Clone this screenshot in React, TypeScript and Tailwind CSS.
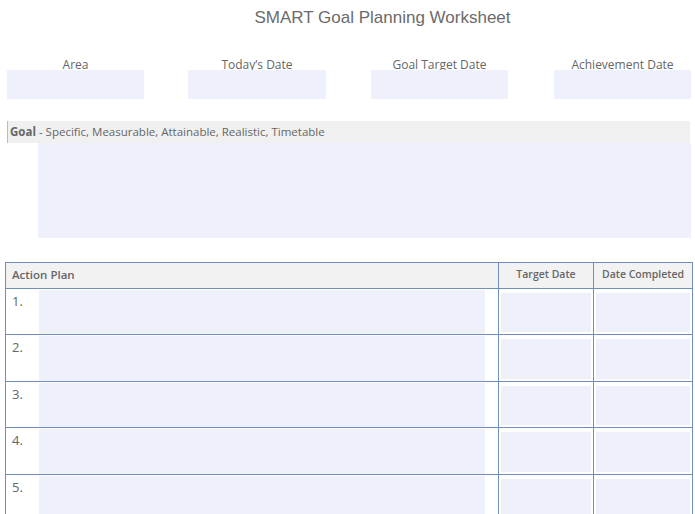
const fill = "bg-[#eef1fc]";
const font = { fontFamily: '"Open Sans", "Liberation Sans", sans-serif' };

export default function App() {
  const fields = [
    { label: "Area", w: "w-[137px]", ml: "ml-[7px]" },
    { label: "Today’s Date", w: "w-[138px]", ml: "ml-[44px]" },
    { label: "Goal Target Date", w: "w-[137px]", ml: "ml-[45px]" },
    { label: "Achievement Date", w: "w-[137px]", ml: "ml-[46px]" },
  ];

  return (
    <div className="h-[514px] w-[695px] overflow-hidden bg-white text-[#666]" style={font}>
      <div
        className="pt-[5px] text-center text-[17px] text-[#6b6b6b]"
        style={{ fontFamily: '"Liberation Sans", Arial, sans-serif', paddingLeft: 70 }}
      >
        SMART Goal Planning Worksheet
      </div>

      {/* DATE FIELDS */}
      <div className="mt-[28px] flex">
        {fields.map((f) => (
          <div key={f.label} className={`${f.ml} flex ${f.w} flex-col`}>
            <div className="text-center text-[12px] leading-[12px]">{f.label}</div>
            <div className={`-mt-[1px] h-[29px] ${fill}`} />
          </div>
        ))}
      </div>

      {/* GOAL */}
      <div className="ml-[7px] mt-[22px] w-[683px] border-l border-[#bbb] bg-[#f0f0f0] py-[3px] pl-[2px] text-[11.5px] leading-[16px]">
        <span className="font-bold">Goal</span> - Specific, Measurable, Attainable, Realistic, Timetable
      </div>
      <div className={`ml-[38px] h-[95px] w-[653px] ${fill}`} />

      {/* ACTION PLAN */}
      <div className="ml-[5px] mt-[24px] w-[688px] border border-[#6f8fbf]">
        <div className="flex h-[25px] items-center bg-[#f2f2f2] text-[11.5px] font-semibold">
          <div className="flex-1 pl-[6px]">Action Plan</div>
          <div className="flex h-full w-[95px] items-center justify-center border-l border-[#6f8fbf] text-[10.5px]">
            Target Date
          </div>
          <div className="flex h-full w-[99px] items-center justify-center border-l border-[#6f8fbf] text-[10.5px]">
            Date Completed
          </div>
        </div>
        {[1, 2, 3, 4, 5].map((n) => (
          <div key={n} className="flex h-[46.5px] border-t border-[#6f8fbf]">
            <div className="flex flex-1">
              <div className="w-[33px] pl-[6px] pt-[3px] text-[13px]">{n}.</div>
              <div className={`mt-[1px] w-[446px] ${fill}`} />
            </div>
            <div className="w-[95px] border-l border-[#6f8fbf] p-[2px] pt-[4px]">
              <div className={`h-full ${fill}`} />
            </div>
            <div className="w-[99px] border-l border-[#6f8fbf] p-[2px] pt-[4px]">
              <div className={`h-full ${fill}`} />
            </div>
          </div>
        ))}
      </div>
    </div>
  );
}
